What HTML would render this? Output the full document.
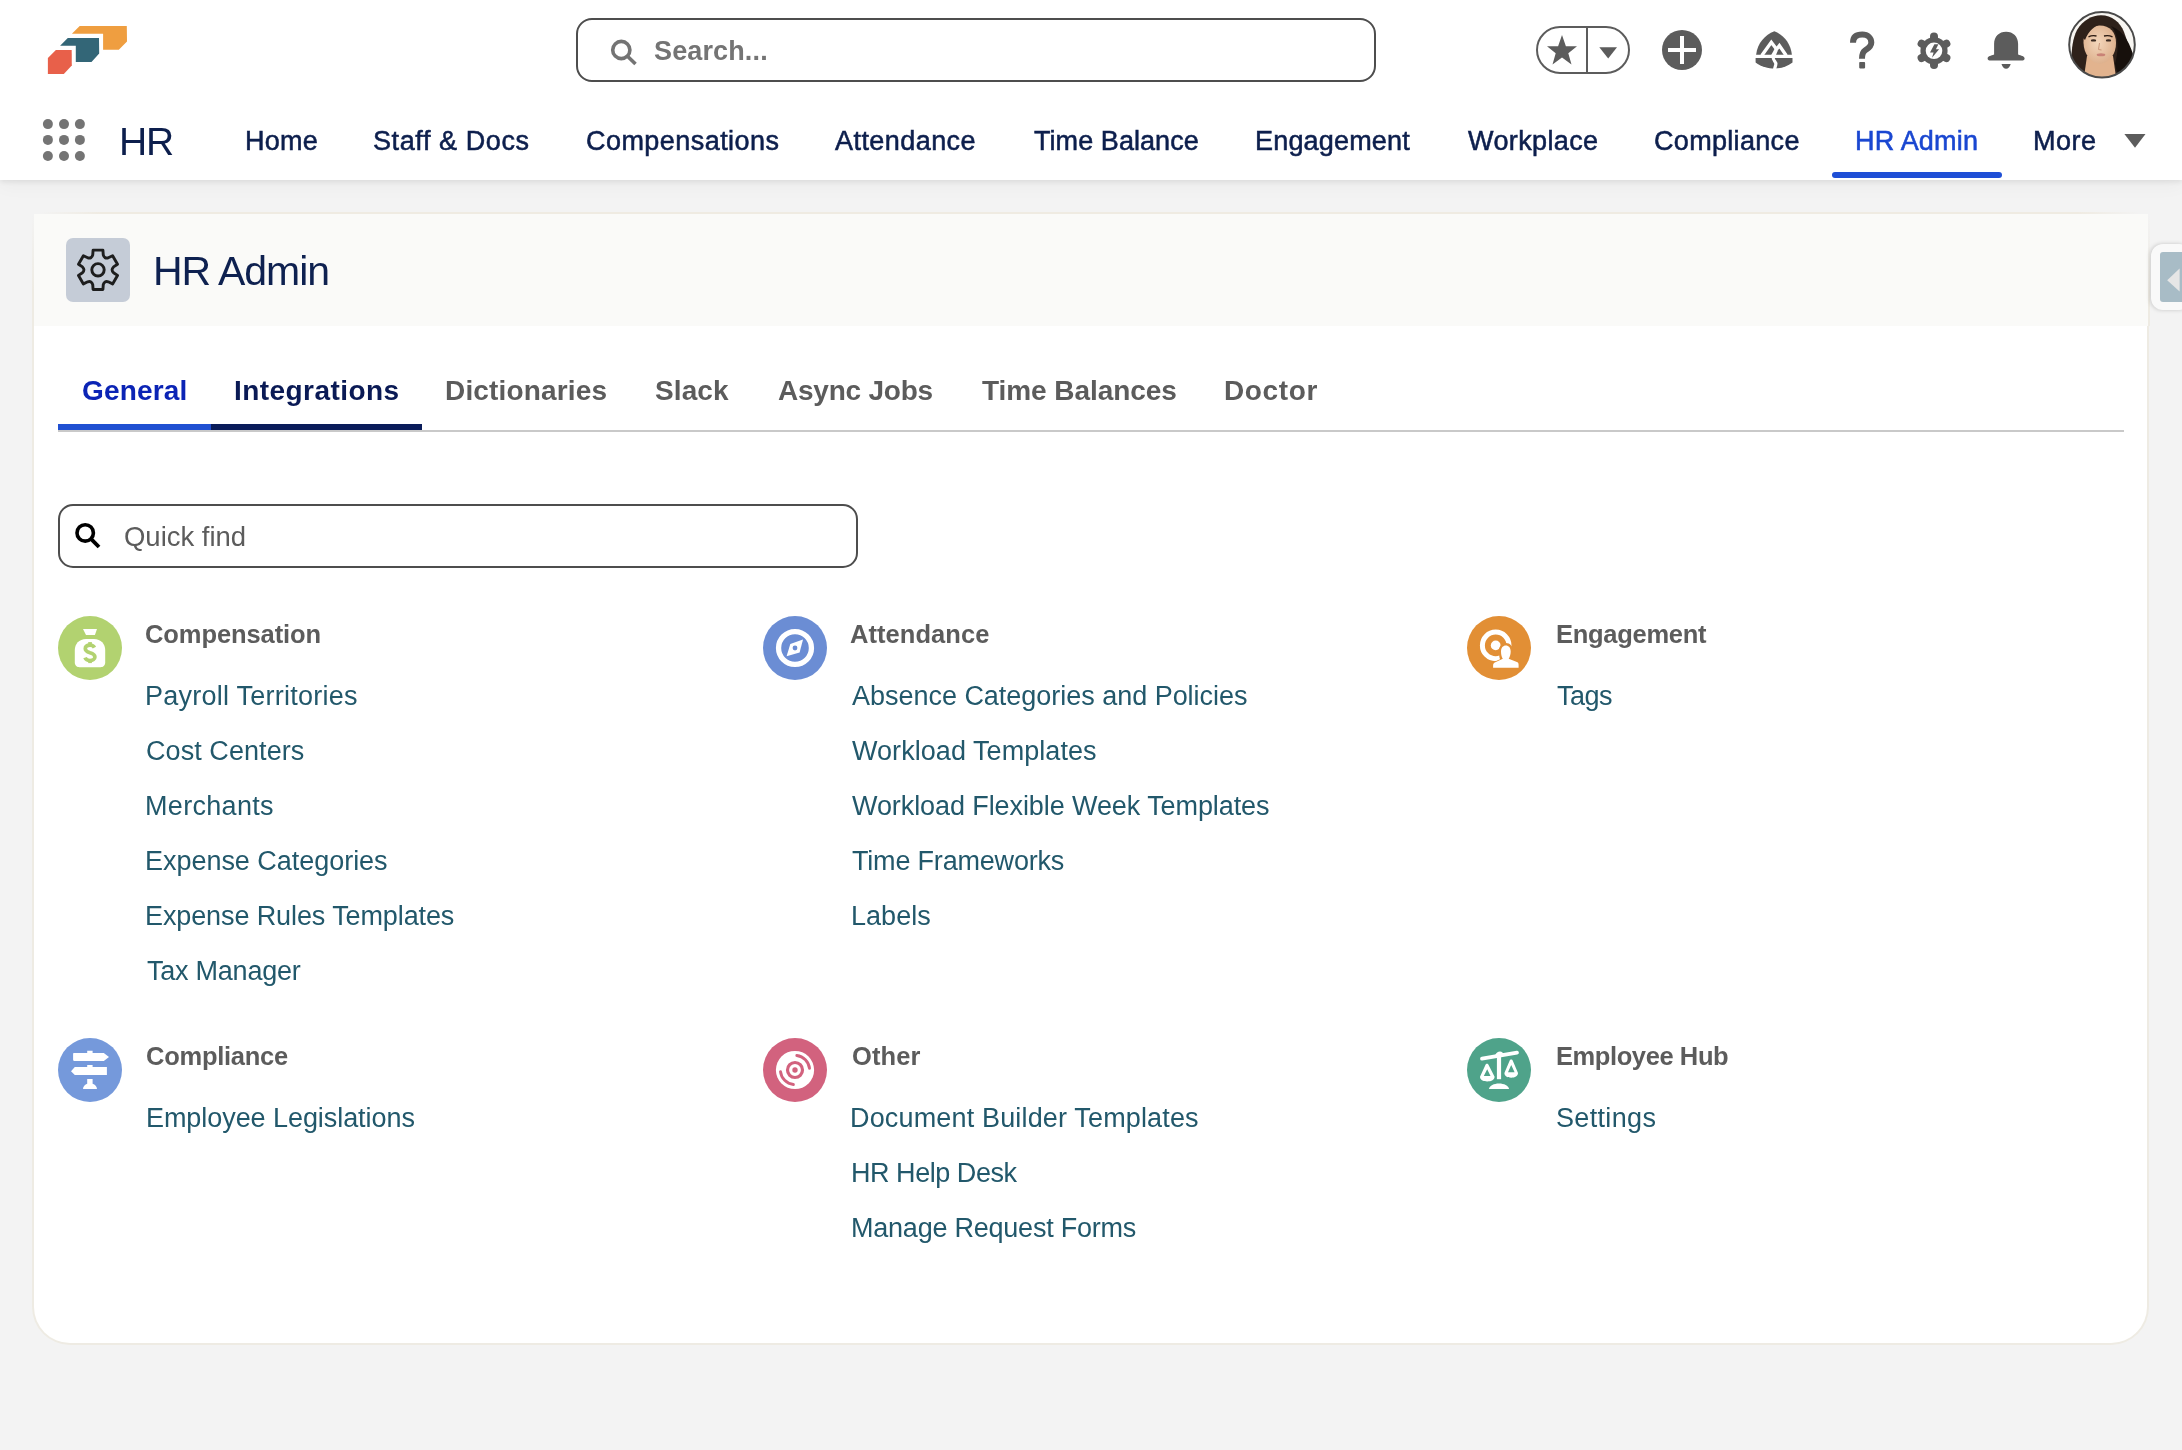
<!DOCTYPE html><html><head><meta charset="utf-8"><title>HR Admin</title><style>
*{box-sizing:border-box;margin:0;padding:0}
html,body{width:2182px;height:1450px;overflow:hidden;background:#f3f3f3;font-family:"Liberation Sans", sans-serif}
.a{position:absolute}
.t{position:absolute;white-space:nowrap;will-change:transform}
</style></head><body><div class="a" style="left:0;top:0;width:2182px;height:180px;background:#fff;box-shadow:0 2px 5px rgba(0,0,0,0.075), 0 6px 18px rgba(0,0,0,0.035)"></div>
<svg class="a" style="left:0;top:0" width="140" height="90" viewBox="0 0 140 90">
<polygon fill="#EF9E40" points="71.9,33.7 79.7,26 126.8,26 127,41.4 118.8,49.8 103.1,49.8 103.1,33.7"/>
<polygon fill="#336677" points="60.1,45.8 67.8,38.1 99,38.1 99.2,53.6 91.5,61.9 75.8,61.9 75.8,45.8"/>
<polygon fill="#E8604A" points="47.9,58 55.9,50 71.7,50 71.8,65.4 63.8,74 47.9,74"/>
</svg>
<div class="a" style="left:576px;top:18px;width:800px;height:64px;border:2px solid #4d4d4d;border-radius:16px;background:#fff"></div>
<svg class="a" style="left:600px;top:30px" width="50" height="45" viewBox="600 30 50 45">
<circle cx="621.3" cy="50" r="8.6" fill="none" stroke="#747474" stroke-width="3.6"/>
<line x1="627.5" y1="56.2" x2="635.5" y2="64" stroke="#747474" stroke-width="3.6"/>
</svg>
<div class="t" style="left:654.38px;top:37.50px;font-size:27px;line-height:27px;color:#747474;font-weight:700;letter-spacing:0.135px;">Search...</div>
<div class="a" style="left:1536px;top:26px;width:94px;height:48px;border:2px solid #5c5c5c;border-radius:24px"></div>
<div class="a" style="left:1586px;top:27px;width:2px;height:46px;background:#5c5c5c"></div>
<svg class="a" style="left:1540px;top:30px" width="90" height="42" viewBox="1540 30 90 42">
<polygon fill="#5c5c5c" points="1562,35 1565.9,46.3 1577,46.3 1568.3,53.2 1571.5,64.5 1562,57.6 1552.5,64.5 1555.7,53.2 1547,46.3 1558.1,46.3"/>
<polygon fill="#5c5c5c" points="1599.3,47.2 1617,47.2 1608.2,58.5"/>
</svg>
<svg class="a" style="left:1660px;top:28px" width="44" height="44" viewBox="1660 28 44 44">
<circle cx="1682" cy="50" r="20" fill="#5c5c5c"/>
<rect x="1668" y="48" width="28" height="4" fill="#fff"/>
<rect x="1680" y="36" width="4" height="28" fill="#fff"/>
</svg>
<svg class="a" style="left:1750px;top:28px" width="48" height="44" viewBox="1750 28 48 44">
<path fill="#5c5c5c" d="M1774.3,31.3 C1765,35 1757.5,43 1756.1,54.8 L1791.9,54.8 C1790.5,43 1783.5,35 1774.3,31.3 Z"/>
<path fill="none" stroke="#fff" stroke-width="3.4" stroke-linejoin="miter" d="M1761.8,55.5 L1771.3,42.3 L1776.6,49.3 L1779.4,45.6 L1786.2,55.5"/>
<polygon fill="#fff" points="1774.8,48.5 1771.2,54.9 1776,54.9 1777.6,51"/>
<path fill="#5c5c5c" d="M1755.6,58 L1792.5,58 L1792.5,62.4 C1787,66.5 1781,68.4 1775,68.4 C1768,68.4 1761,66.5 1755.6,62.4 Z"/>
<path fill="none" stroke="#fff" stroke-width="3.2" d="M1773.3,57.5 C1772.5,60.5 1776.5,61.5 1775.8,64.5 C1775.5,66.2 1774.8,67.5 1774.6,69.5"/>
</svg>
<svg class="a" style="left:1845px;top:28px" width="36" height="44" viewBox="1845 28 36 44">
<path fill="none" stroke="#5c5c5c" stroke-width="6" stroke-linecap="butt" d="M1853,42.8 C1853,37 1856.5,34.6 1862.3,34.6 C1868,34.6 1871.3,38 1871.3,42.5 C1871.3,47 1867.5,48.8 1865,50.5 C1862.8,52 1862,53.5 1862,58.8"/>
<rect x="1859.2" y="62.1" width="5.9" height="6.3" rx="0.8" fill="#5c5c5c"/>
</svg>
<svg class="a" style="left:1912px;top:28px" width="44" height="46" viewBox="1912 28 44 46">
<circle cx="1934" cy="50.8" r="13.6" fill="#5c5c5c"/>
<line x1="1934.00" y1="50.80" x2="1934.00" y2="36.50" stroke="#5c5c5c" stroke-width="8" stroke-linecap="round"/><line x1="1934.00" y1="50.80" x2="1946.38" y2="43.65" stroke="#5c5c5c" stroke-width="8" stroke-linecap="round"/><line x1="1934.00" y1="50.80" x2="1946.38" y2="57.95" stroke="#5c5c5c" stroke-width="8" stroke-linecap="round"/><line x1="1934.00" y1="50.80" x2="1934.00" y2="65.10" stroke="#5c5c5c" stroke-width="8" stroke-linecap="round"/><line x1="1934.00" y1="50.80" x2="1921.62" y2="57.95" stroke="#5c5c5c" stroke-width="8" stroke-linecap="round"/><line x1="1934.00" y1="50.80" x2="1921.62" y2="43.65" stroke="#5c5c5c" stroke-width="8" stroke-linecap="round"/>
<circle cx="1934" cy="50.8" r="8.3" fill="#fff"/>
<polygon fill="#5c5c5c" points="1934.4,44.2 1938.4,44.2 1935.9,49.2 1939.1,49.2 1932,57.8 1933.6,52.4 1930,52.4"/>
</svg>
<svg class="a" style="left:1984px;top:28px" width="44" height="44" viewBox="1984 28 44 44">
<path fill="#5c5c5c" d="M2006.1,31.7 C1999,31.7 1994.1,36.5 1994.1,44 L1994.1,54.5 C1991,55.5 1987.6,56.5 1987.6,58.3 C1987.6,59.8 1988.3,60.4 1989.5,60.4 L2022.7,60.4 C2023.9,60.4 2024.6,59.8 2024.6,58.3 C2024.6,56.5 2021.2,55.5 2018.1,54.5 L2018.1,44 C2018.1,36.5 2013.2,31.7 2006.1,31.7 Z"/>
<path fill="#5c5c5c" d="M2001.5,63.9 L2010.7,63.9 C2009.8,67 2008.2,68.7 2006.1,68.7 C2004,68.7 2002.4,67 2001.5,63.9 Z"/>
</svg>
<svg class="a" style="left:2064px;top:8px" width="76" height="76" viewBox="2064 8 76 76">
<defs><clipPath id="av"><circle cx="2102" cy="44.8" r="32.8"/></clipPath>
<radialGradient id="sk" cx="0.45" cy="0.45" r="0.6"><stop offset="0" stop-color="#f3d6bb"/><stop offset="1" stop-color="#dcae8a"/></radialGradient></defs>
<g clip-path="url(#av)">
<rect x="2064" y="8" width="76" height="76" fill="#f8f6f2"/>
<path fill="#2e211a" d="M2072,72 C2071,58 2071,42 2077,30 C2083,20 2092,15.5 2101,15.3 C2112,15.5 2120,22 2124,32 C2128,42 2130,52 2131,62 C2128,70 2122,76 2116,80 L2086,80 Z"/>
<path fill="#e2b38e" d="M2087,56 L2113,56 L2117,84 L2083,84 Z"/>
<path fill="url(#sk)" d="M2083.5,43 C2083,32 2089,26 2099.5,25.5 C2110,25.5 2116,32 2116,43 C2116,54 2110,62.5 2100,64 C2090,62.5 2084,54 2083.5,43 Z"/>
<path fill="#2e211a" d="M2083,38 C2085,28 2092,23.5 2101,24 C2095,26 2089,30 2085,40 Z"/>
<path fill="#17100c" d="M2111,26 C2118,33 2119.5,48 2115,64 L2119,80 L2136,64 C2131,46 2126,32 2111,26 Z"/>
<path d="M2088.5,36.8 C2091,35.6 2094,35.4 2096.5,36 M2104,36 C2106.5,35.4 2110,35.6 2112.5,36.8" stroke="#2a1a12" stroke-width="1.3" fill="none"/>
<ellipse cx="2093.5" cy="40.4" rx="2.7" ry="1.2" fill="#3a2a22"/>
<ellipse cx="2108.5" cy="40.4" rx="2.7" ry="1.2" fill="#3a2a22"/>
<path d="M2099.5,43 L2098.5,49.5 L2101.5,50" stroke="#c8967a" stroke-width="1" fill="none"/>
<ellipse cx="2101" cy="54.8" rx="4.3" ry="1.5" fill="#c98276"/>
</g>
<circle cx="2102" cy="44.8" r="32.8" fill="none" stroke="#4a4a4a" stroke-width="2"/>
</svg>
<svg class="a" style="left:30px;top:110px" width="70" height="60" viewBox="30 110 70 60"><circle cx="47.9" cy="124.1" r="5" fill="#747474"/><circle cx="47.9" cy="139.9" r="5" fill="#747474"/><circle cx="47.9" cy="156" r="5" fill="#747474"/><circle cx="64" cy="124.1" r="5" fill="#747474"/><circle cx="64" cy="139.9" r="5" fill="#747474"/><circle cx="64" cy="156" r="5" fill="#747474"/><circle cx="79.9" cy="124.1" r="5" fill="#747474"/><circle cx="79.9" cy="139.9" r="5" fill="#747474"/><circle cx="79.9" cy="156" r="5" fill="#747474"/></svg>
<div class="t" style="left:119.38px;top:122.00px;font-size:39px;line-height:39px;color:#0d1f4d;font-weight:400;letter-spacing:-1.080px;">HR</div>
<div class="t" style="left:245.20px;top:127.50px;font-size:27px;line-height:27px;color:#0d1f4d;font-weight:400;letter-spacing:0.240px;-webkit-text-stroke:0.55px #0d1f4d;">Home</div>
<div class="t" style="left:373.26px;top:127.50px;font-size:27px;line-height:27px;color:#0d1f4d;font-weight:400;letter-spacing:0.589px;-webkit-text-stroke:0.55px #0d1f4d;">Staff &amp; Docs</div>
<div class="t" style="left:585.60px;top:127.50px;font-size:27px;line-height:27px;color:#0d1f4d;font-weight:400;letter-spacing:0.450px;-webkit-text-stroke:0.55px #0d1f4d;">Compensations</div>
<div class="t" style="left:835.44px;top:127.50px;font-size:27px;line-height:27px;color:#0d1f4d;font-weight:400;letter-spacing:0.440px;-webkit-text-stroke:0.55px #0d1f4d;">Attendance</div>
<div class="t" style="left:1033.94px;top:127.50px;font-size:27px;line-height:27px;color:#0d1f4d;font-weight:400;letter-spacing:0.065px;-webkit-text-stroke:0.55px #0d1f4d;">Time Balance</div>
<div class="t" style="left:1254.70px;top:127.50px;font-size:27px;line-height:27px;color:#0d1f4d;font-weight:400;letter-spacing:0.180px;-webkit-text-stroke:0.55px #0d1f4d;">Engagement</div>
<div class="t" style="left:1467.78px;top:127.50px;font-size:27px;line-height:27px;color:#0d1f4d;font-weight:400;letter-spacing:0.383px;-webkit-text-stroke:0.55px #0d1f4d;">Workplace</div>
<div class="t" style="left:1653.82px;top:127.50px;font-size:27px;line-height:27px;color:#0d1f4d;font-weight:400;letter-spacing:0.320px;-webkit-text-stroke:0.55px #0d1f4d;">Compliance</div>
<div class="t" style="left:1855.14px;top:127.50px;font-size:27px;line-height:27px;color:#1a47d1;font-weight:400;letter-spacing:0.206px;-webkit-text-stroke:0.55px #1a47d1;">HR Admin</div>
<div class="t" style="left:2032.92px;top:127.50px;font-size:27px;line-height:27px;color:#0d1f4d;font-weight:400;letter-spacing:0.540px;-webkit-text-stroke:0.55px #0d1f4d;">More</div>
<svg class="a" style="left:2120px;top:130px" width="30" height="22" viewBox="2120 130 30 22"><polygon fill="#5c5c5c" points="2124.4,134.1 2145.5,134.1 2135,147.8"/></svg>
<div class="a" style="left:1832px;top:172px;width:170px;height:6px;border-radius:3px;background:#1f4fd6"></div>
<div class="a" style="left:32.2px;top:214px;width:2117.3px;height:1130.8px;background:#fff;border:2px solid #eeebe3;border-top:none;border-radius:0 0 38px 38px"></div>
<div class="a" style="left:34px;top:214px;width:2114px;height:112px;background:#fafaf8"></div>
<div class="a" style="left:40px;top:212px;width:2100px;height:2px;background:linear-gradient(90deg, rgba(238,235,227,0), #efebe2 3%, #efebe2 97%, rgba(238,235,227,0))"></div>
<div class="a" style="left:32.2px;top:214px;width:2px;height:112px;background:linear-gradient(#f3f3f3, #eeebe3 70%)"></div>
<div class="a" style="left:2147.5px;top:214px;width:2px;height:112px;background:linear-gradient(#f3f3f3, #eeebe3 70%)"></div>
<div class="a" style="left:66px;top:238px;width:64px;height:64px;border-radius:7px;background:#c5ccd7"></div>
<svg class="a" style="left:66px;top:238px" width="64" height="64" viewBox="66 238 64 64">
<path fill="none" stroke="#1e1e1e" stroke-width="2.9" stroke-linejoin="round" d="M93.09,250.10 L102.91,250.10 L103.27,254.91 Q104.30,258.89 108.26,257.79 L112.60,255.70 L117.51,264.20 L113.54,266.92 Q110.60,269.80 113.54,272.68 L117.51,275.40 L112.60,283.90 L108.26,281.81 Q104.30,280.71 103.27,284.69 L102.91,289.50 L93.09,289.50 L92.73,284.69 Q91.70,280.71 87.74,281.81 L83.40,283.90 L78.49,275.40 L82.46,272.68 Q85.40,269.80 82.46,266.92 L78.49,264.20 L83.40,255.70 L87.74,257.79 Q91.70,258.89 92.73,254.91 Z"/>
<circle cx="98" cy="269.8" r="6.2" fill="none" stroke="#1e1e1e" stroke-width="2.9"/>
</svg>
<div class="t" style="left:152.88px;top:250.70px;font-size:41px;line-height:41px;color:#0e2150;font-weight:400;letter-spacing:-1.080px;">HR Admin</div>
<div class="t" style="left:82.10px;top:377.20px;font-size:28px;line-height:28px;color:#0b24b5;font-weight:700;letter-spacing:0.180px;">General</div>
<div class="t" style="left:233.98px;top:377.20px;font-size:28px;line-height:28px;color:#0a1a55;font-weight:700;letter-spacing:0.442px;">Integrations</div>
<div class="t" style="left:445.14px;top:377.20px;font-size:28px;line-height:28px;color:#5c5c5c;font-weight:700;letter-spacing:0.164px;">Dictionaries</div>
<div class="t" style="left:655.26px;top:377.20px;font-size:28px;line-height:28px;color:#5c5c5c;font-weight:700;letter-spacing:0.090px;">Slack</div>
<div class="t" style="left:777.88px;top:377.20px;font-size:28px;line-height:28px;color:#5c5c5c;font-weight:700;letter-spacing:-0.220px;">Async Jobs</div>
<div class="t" style="left:982.06px;top:377.20px;font-size:28px;line-height:28px;color:#5c5c5c;font-weight:700;letter-spacing:-0.060px;">Time Balances</div>
<div class="t" style="left:1223.70px;top:377.20px;font-size:28px;line-height:28px;color:#5c5c5c;font-weight:700;letter-spacing:0.648px;">Doctor</div>
<div class="a" style="left:58px;top:430px;width:2066px;height:2px;background:#c9c9c9"></div>
<div class="a" style="left:58px;top:424px;width:153px;height:6px;background:#2050d2"></div>
<div class="a" style="left:211px;top:424px;width:211px;height:6px;background:#0a1c5a"></div>
<div class="a" style="left:58px;top:504px;width:800px;height:64px;border:2px solid #4d4d4d;border-radius:15px;background:#fff"></div>
<svg class="a" style="left:70px;top:515px" width="40" height="40" viewBox="70 515 40 40">
<circle cx="85.2" cy="532.9" r="8.2" fill="none" stroke="#000" stroke-width="3.6"/>
<line x1="91" y1="538.8" x2="99" y2="547" stroke="#000" stroke-width="3.8"/>
</svg>
<div class="t" style="left:124.04px;top:522.85px;font-size:27.5px;line-height:27.5px;color:#5c5c5c;font-weight:400;letter-spacing:-0.020px;">Quick find</div>
<div class="a" style="left:2151px;top:244px;width:40px;height:66px;border-radius:12px;background:#f9f9f9;box-shadow:-1px 0 4px rgba(0,0,0,0.18)"></div>
<div class="a" style="left:2160px;top:252px;width:30px;height:50px;border-radius:3px;background:#a8bcc6"></div>
<svg class="a" style="left:2160px;top:252px" width="22" height="50" viewBox="2160 252 22 50"><polygon fill="#e6e6e6" points="2167.2,280.3 2179.6,268.5 2179.6,291.4"/></svg>
<svg class="a" style="left:58px;top:616px" width="64" height="64" viewBox="0 0 64 64"><circle cx="32" cy="32" r="32" fill="#b2d270"/>
<path fill="#fff" d="M25,13 L39,13 L36.9,19.1 L28,19.1 Z"/>
<path fill="#fff" d="M28,22.9 L36,22.9 C43,22.9 47.2,28 47.2,34 L47.2,46.5 C47.2,49.5 45,51.2 42.5,51.2 L21.5,51.2 C19,51.2 16.8,49.5 16.8,46.5 L16.8,34 C16.8,28 21,22.9 28,22.9 Z"/>
<path fill="none" stroke="#b2d270" stroke-width="3.7" d="M36.4,31.6 C35.6,29.9 34,29.1 32,29.1 C29,29.1 27.3,30.7 27.3,32.8 C27.3,35.2 29.5,36 32,36.8 C34.8,37.6 36.9,38.5 36.9,41 C36.9,43.2 34.8,44.5 32,44.5 C29.6,44.5 27.8,43.6 27,41.6"/><rect x="30.2" y="26.1" width="3.7" height="4" fill="#b2d270"/><rect x="30.2" y="43.2" width="3.7" height="3.9" fill="#b2d270"/>
</svg>
<div class="t" style="left:145.32px;top:621.55px;font-size:25.5px;line-height:25.5px;color:#5c5c5c;font-weight:700;letter-spacing:-0.082px;">Compensation</div>
<div class="t" style="left:145.20px;top:682.60px;font-size:27px;line-height:27px;color:#22586b;font-weight:400;letter-spacing:0.240px;">Payroll Territories</div>
<div class="t" style="left:146.10px;top:737.60px;font-size:27px;line-height:27px;color:#22586b;font-weight:400;letter-spacing:0.065px;">Cost Centers</div>
<div class="t" style="left:145.20px;top:792.60px;font-size:27px;line-height:27px;color:#22586b;font-weight:400;letter-spacing:0.315px;">Merchants</div>
<div class="t" style="left:145.20px;top:847.60px;font-size:27px;line-height:27px;color:#22586b;font-weight:400;letter-spacing:-0.032px;">Expense Categories</div>
<div class="t" style="left:145.20px;top:902.60px;font-size:27px;line-height:27px;color:#22586b;font-weight:400;letter-spacing:-0.106px;">Expense Rules Templates</div>
<div class="t" style="left:147.00px;top:957.60px;font-size:27px;line-height:27px;color:#22586b;font-weight:400;letter-spacing:-0.234px;">Tax Manager</div>
<svg class="a" style="left:763px;top:616px" width="64" height="64" viewBox="0 0 64 64"><circle cx="32" cy="32" r="32" fill="#6b8dd4"/>
<circle cx="32" cy="32" r="16.45" fill="none" stroke="#fff" stroke-width="5.3"/>
<polygon fill="#fff" points="23.6,40.2 27.3,28 40,23.6 36.6,36.5"/>
<circle cx="32" cy="32" r="2.4" fill="#6b8dd4"/>
</svg>
<div class="t" style="left:850.32px;top:621.55px;font-size:25.5px;line-height:25.5px;color:#5c5c5c;font-weight:700;letter-spacing:0.060px;">Attendance</div>
<div class="t" style="left:852.06px;top:682.60px;font-size:27px;line-height:27px;color:#22586b;font-weight:400;letter-spacing:-0.024px;">Absence Categories and Policies</div>
<div class="t" style="left:852.28px;top:737.60px;font-size:27px;line-height:27px;color:#22586b;font-weight:400;letter-spacing:0.053px;">Workload Templates</div>
<div class="t" style="left:852.28px;top:792.60px;font-size:27px;line-height:27px;color:#22586b;font-weight:400;letter-spacing:-0.087px;">Workload Flexible Week Templates</div>
<div class="t" style="left:851.72px;top:847.60px;font-size:27px;line-height:27px;color:#22586b;font-weight:400;letter-spacing:-0.193px;">Time Frameworks</div>
<div class="t" style="left:850.70px;top:902.60px;font-size:27px;line-height:27px;color:#22586b;font-weight:400;letter-spacing:0.036px;">Labels</div>
<svg class="a" style="left:1467px;top:616px" width="64" height="64" viewBox="0 0 64 64"><circle cx="32" cy="32" r="32" fill="#e28f35"/>
<circle cx="28.7" cy="29.4" r="13.3" fill="none" stroke="#fff" stroke-width="5"/>
<circle cx="28.7" cy="29.4" r="4.9" fill="#fff"/>
<path fill="#e28f35" d="M32,33 C33,29 36,27 39,27 C43,27 46,30 46,35 C46,38 45,41 43.5,43 L52,46.5 C54,47.5 55,49.5 55,53 L24,53 C24,49 25,47 27.5,45.8 L33,43.3 C32,41 32,37 32,33 Z"/>
<path fill="#fff" d="M34,35.5 C34,31.5 36,29.4 38.8,29.4 C41.7,29.4 43.7,31.5 43.7,35.5 C43.7,38.5 42.6,41.3 41.7,42.7 L50.5,46.2 C51.5,46.8 51.6,48 51.6,49 L51.6,51.7 L26.1,51.7 L26.1,49.5 C26.1,48 26.6,47.3 27.8,46.6 L35.8,42.8 C34.8,41.3 34,38.5 34,35.5 Z"/>
</svg>
<div class="t" style="left:1555.88px;top:621.55px;font-size:25.5px;line-height:25.5px;color:#5c5c5c;font-weight:700;letter-spacing:-0.280px;">Engagement</div>
<div class="t" style="left:1556.78px;top:682.60px;font-size:27px;line-height:27px;color:#22586b;font-weight:400;letter-spacing:-0.480px;">Tags</div>
<svg class="a" style="left:58px;top:1038px" width="64" height="64" viewBox="0 0 64 64"><circle cx="32" cy="32" r="32" fill="#7599db"/>
<path fill="#fff" d="M29.2,15.1 L29.2,12.8 L34.6,12.8 L34.6,15.1 L45.8,15.1 L51,19.1 L45.8,22.9 L16,22.9 C15.4,22.9 15.1,22.5 15.1,21.8 L15.1,16.3 C15.1,15.6 15.4,15.1 16,15.1 Z"/>
<path fill="#fff" d="M29.2,29 L29.2,27.1 L34.6,27.1 L34.6,29 L48.9,29 L48.9,36.9 L16.8,36.9 L13,33.2 L16.8,29 Z"/>
<path fill="#fff" d="M29.2,40.9 L34.6,40.9 L34.6,45.8 C37,46.5 39,48.5 39,51 L25,51 C25,48.5 27,46.5 29.2,45.8 Z"/>
</svg>
<div class="t" style="left:145.54px;top:1043.55px;font-size:25.5px;line-height:25.5px;color:#5c5c5c;font-weight:700;letter-spacing:-0.260px;">Compliance</div>
<div class="t" style="left:146.20px;top:1104.60px;font-size:27px;line-height:27px;color:#22586b;font-weight:400;letter-spacing:-0.063px;">Employee Legislations</div>
<svg class="a" style="left:763px;top:1038px" width="64" height="64" viewBox="0 0 64 64"><circle cx="32" cy="32" r="32" fill="#d2627e"/>
<circle cx="32" cy="32" r="19.1" fill="#fff"/>
<circle cx="32" cy="32" r="7.5" fill="none" stroke="#d2627e" stroke-width="3.2"/>
<circle cx="32" cy="32" r="2.7" fill="#d2627e"/>
<path fill="none" stroke="#d2627e" stroke-width="2.9" stroke-linecap="round" d="M33.8,17.5 A14.6,14.6 0 0 1 46.5,30.4"/>
<path fill="none" stroke="#d2627e" stroke-width="2.9" stroke-linecap="round" d="M17.5,33.6 A14.6,14.6 0 0 0 30.4,46.5"/>
</svg>
<div class="t" style="left:851.66px;top:1043.55px;font-size:25.5px;line-height:25.5px;color:#5c5c5c;font-weight:700;letter-spacing:0.090px;">Other</div>
<div class="t" style="left:849.86px;top:1104.60px;font-size:27px;line-height:27px;color:#22586b;font-weight:400;letter-spacing:0.158px;">Document Builder Templates</div>
<div class="t" style="left:851.48px;top:1159.60px;font-size:27px;line-height:27px;color:#22586b;font-weight:400;letter-spacing:-0.458px;">HR Help Desk</div>
<div class="t" style="left:851.48px;top:1214.60px;font-size:27px;line-height:27px;color:#22586b;font-weight:400;letter-spacing:-0.227px;">Manage Request Forms</div>
<svg class="a" style="left:1467px;top:1038px" width="64" height="64" viewBox="0 0 64 64"><circle cx="32" cy="32" r="32" fill="#4fa38a"/>
<path fill="none" stroke="#fff" stroke-width="3.8" stroke-linecap="round" d="M15,20.6 L50,14.6"/>
<path fill="#fff" d="M28,17.5 C29,15 31,13.6 33,13.6 C35,13.6 36,15 37,16.5 Z"/>
<rect x="29.9" y="18" width="4.2" height="23.2" fill="#fff"/>
<path fill="#fff" fill-rule="evenodd" d="M20,25.7 C20.8,25.7 21.3,26.2 21.6,27 L27.6,38.8 C27.6,41.8 24.5,43.5 20.3,43.5 C16,43.5 13,41.8 13,38.8 L18.4,27 C18.7,26.2 19.2,25.7 20,25.7 Z M20.2,31.2 L16.8,37.9 L23.5,37.9 Z"/>
<path fill="#fff" fill-rule="evenodd" d="M44.2,21.5 C45,21.5 45.5,22 45.8,22.8 L51,35 C51,38 48,39.7 44.2,39.7 C40.2,39.7 37.4,38 37.4,35 L42.6,22.8 C42.9,22 43.4,21.5 44.2,21.5 Z M44.2,27 L41,34.2 L47.6,34.2 Z"/>
<path fill="#fff" d="M21.9,51 C22.5,47.5 27,45.4 32,45.4 C37,45.4 41.5,47.5 42.1,51 Z"/>
</svg>
<div class="t" style="left:1555.88px;top:1043.55px;font-size:25.5px;line-height:25.5px;color:#5c5c5c;font-weight:700;letter-spacing:-0.409px;">Employee Hub</div>
<div class="t" style="left:1555.88px;top:1104.60px;font-size:27px;line-height:27px;color:#22586b;font-weight:400;letter-spacing:0.334px;">Settings</div></body></html>
